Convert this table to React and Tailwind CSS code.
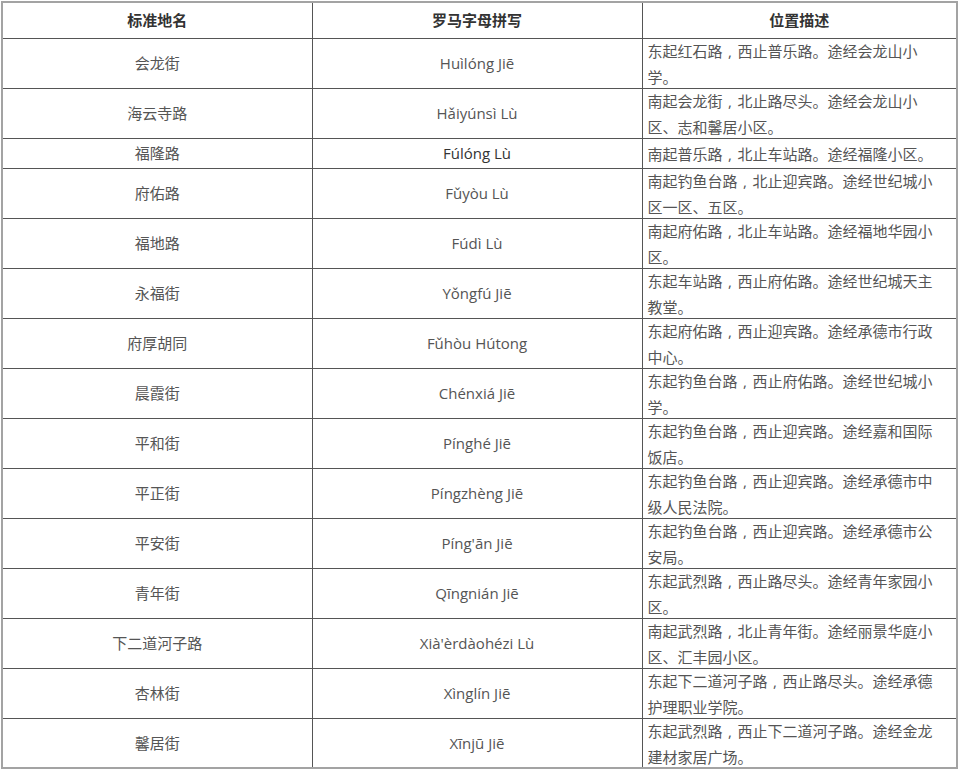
import React from "react";

const rows = [
  ["会龙街", "Huìlóng Jiē", "东起红石路，西止普乐路。途经会龙山小学。"],
  ["海云寺路", "Hǎiyúnsì Lù", "南起会龙街，北止路尽头。途经会龙山小区、志和馨居小区。"],
  ["福隆路", "Fúlóng Lù", "南起普乐路，北止车站路。途经福隆小区。"],
  ["府佑路", "Fǔyòu Lù", "南起钓鱼台路，北止迎宾路。途经世纪城小区一区、五区。"],
  ["福地路", "Fúdì Lù", "南起府佑路，北止车站路。途经福地华园小区。"],
  ["永福街", "Yǒngfú Jiē", "东起车站路，西止府佑路。途经世纪城天主教堂。"],
  ["府厚胡同", "Fǔhòu Hútong", "东起府佑路，西止迎宾路。途经承德市行政中心。"],
  ["晨霞街", "Chénxiá Jiē", "东起钓鱼台路，西止府佑路。途经世纪城小学。"],
  ["平和街", "Pínghé Jiē", "东起钓鱼台路，西止迎宾路。途经嘉和国际饭店。"],
  ["平正街", "Píngzhèng Jiē", "东起钓鱼台路，西止迎宾路。途经承德市中级人民法院。"],
  ["平安街", "Píng'ān Jiē", "东起钓鱼台路，西止迎宾路。途经承德市公安局。"],
  ["青年街", "Qīngnián Jiē", "东起武烈路，西止路尽头。途经青年家园小区。"],
  ["下二道河子路", "Xià'èrdàohézi Lù", "南起武烈路，北止青年街。途经丽景华庭小区、汇丰园小区。"],
  ["杏林街", "Xìnglín Jiē", "东起下二道河子路，西止路尽头。途经承德护理职业学院。"],
  ["馨居街", "Xīnjū Jiē", "东起武烈路，西止下二道河子路。途经金龙建材家居广场。"],
];

const Desc = ({ text }) => {
  const parts = text.split("，");
  return (
    <>
      {parts.map((p, i) => (
        <React.Fragment key={i}>
          {i > 0 && <span className="inline-block w-[1em] text-center">,</span>}
          {p}
        </React.Fragment>
      ))}
    </>
  );
};

export default function App() {
  return (
    <div className="bg-white w-[960px] h-[774px] pt-[1px] pl-[1px] font-['Open_Sans','Noto_Sans_CJK_SC',sans-serif]">
      <table className="w-[955px] table-fixed border-collapse border-2 border-[#a3a3a3] text-[15px] text-[#555]">
        <colgroup>
          <col className="w-[310px]" />
          <col className="w-[330px]" />
          <col className="w-[315px]" />
        </colgroup>
        <thead>
          <tr className="h-[36px]">
            <th className="border border-[#555] font-bold text-[#333] text-center">标准地名</th>
            <th className="border border-[#555] font-bold text-[#333] text-center">罗马字母拼写</th>
            <th className="border border-[#555] font-bold text-[#333] text-center">位置描述</th>
          </tr>
        </thead>
        <tbody>
          {rows.map(([name, roman, desc], i) => (
            <tr key={name} className={i === 2 ? "h-[30px]" : "h-[50px]"}>
              <td className="border border-[#555] text-center p-0">{name}</td>
              <td className={`border border-[#555] text-center p-0 ${i === 2 ? "text-[#333]" : ""}`}>{roman}</td>
              <td className="border border-[#555] pl-[5px] pr-[20px] py-0">
                <div className="leading-[26px] -mt-[1px] -mb-[3px]">
                  <Desc text={desc} />
                </div>
              </td>
            </tr>
          ))}
        </tbody>
      </table>
    </div>
  );
}
